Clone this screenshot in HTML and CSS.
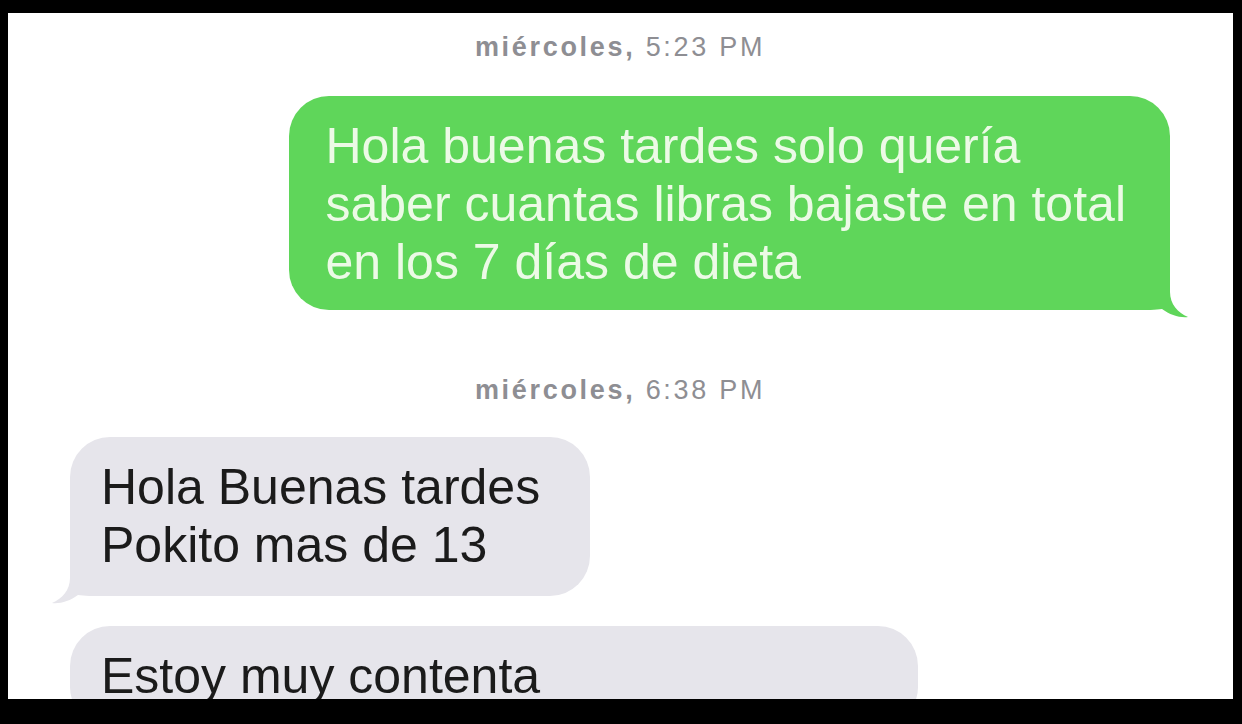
FILE: index.html
```html
<!DOCTYPE html>
<html lang="es">
<head>
<meta charset="utf-8">
<title>Mensajes</title>
<link rel="stylesheet" href="styles.css">
</head>
<body>
<main class="screen">
  <p class="stamp"><b>miércoles,</b> 5:23 PM</p>
  <div class="bubble sent">
    <p class="text">Hola buenas tardes solo quería<br>saber cuantas libras bajaste en total<br>en los 7 días de dieta</p>
    <svg class="tail tail-right" viewBox="0 0 60 48" aria-hidden="true"><path d="M0,0 H40 V22 C40,34 48,43 58,47 C50,48 40,45 32,39 C26,40 18,40 0,40 Z"/></svg>
  </div>
  <p class="stamp stamp-2"><b>miércoles,</b> 6:38 PM</p>
  <div class="bubble received">
    <p class="text">Hola Buenas tardes<br>Pokito mas de 13</p>
    <svg class="tail tail-left" viewBox="0 0 60 48" aria-hidden="true"><path d="M0,0 H40 V22 C40,34 48,43 58,47 C50,48 40,45 32,39 C26,40 18,40 0,40 Z"/></svg>
  </div>
  <div class="bubble received wide">
    <p class="text">Estoy muy contenta</p>
  </div>
</main>
</body>
</html>
```
FILE: styles.css
```css
html, body {
  margin: 0;
  padding: 0;
  background: #000;
}
.screen {
  margin: 13px 9px 0 8px;
  height: 686px;
  background: #fff;
  overflow: hidden;
  display: flex;
  flex-direction: column;
  padding: 0 63px 0 62px;
  box-sizing: border-box;
}
.stamp {
  margin: 19px 0 0;
  text-align: center;
  font-family: "Liberation Sans", Arial, sans-serif;
  font-size: 27px;
  line-height: 30px;
  color: #8e8e93;
  letter-spacing: 2.7px;
}
.stamp b {
  font-weight: 700;
}
.stamp-2 {
  margin-top: 65px;
}
.bubble {
  position: relative;
  font-family: "Liberation Sans", Arial, sans-serif;
  font-size: 50px;
  line-height: 58px;
  white-space: nowrap;
  border-radius: 40px;
}
.text {
  margin: 0;
  position: relative;
  z-index: 1;
}
.sent {
  align-self: flex-end;
  margin-top: 34px;
  padding: 21px 44px 19px 37px;
  background: #5fd65a;
  color: #ecfae6;
}
.received {
  align-self: flex-start;
  margin-top: 32px;
  padding: 21px 50px 22px 31px;
  background: #e6e5eb;
  color: #1b1b1b;
}
.wide {
  width: 848px;
  box-sizing: border-box;
  margin-top: 30px;
}
.tail {
  position: absolute;
  width: 60px;
  height: 48px;
  bottom: -8px;
}
.tail-right {
  right: -20px;
  fill: #5fd65a;
}
.tail-left {
  left: -20px;
  fill: #e6e5eb;
  transform: scaleX(-1);
}
```
